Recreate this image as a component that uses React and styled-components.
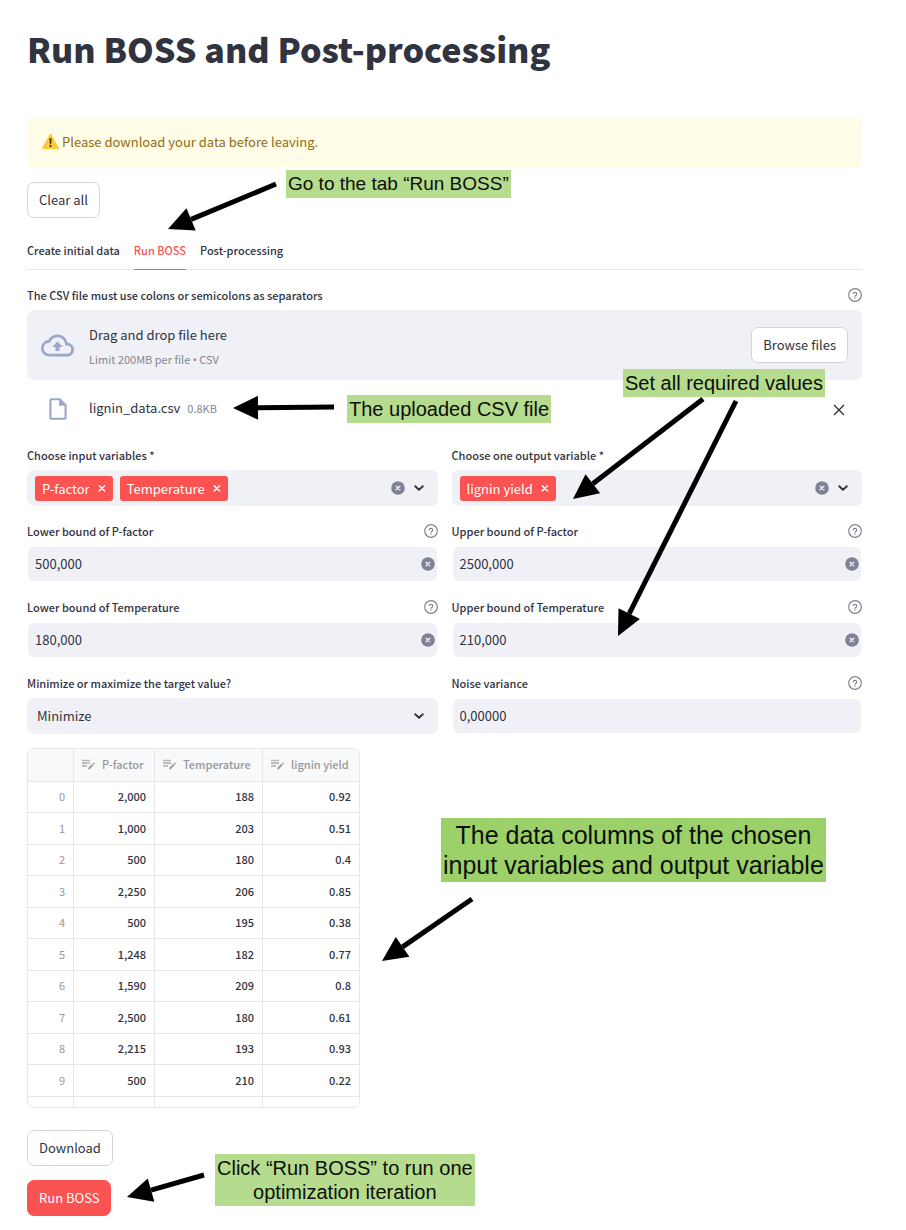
import React, { useState } from "react";
import styled, { createGlobalStyle, css } from "styled-components";

const color = {
  text: "#31333f",
  muted: "#84858d",
  faint: "#96979e",
  red: "#fb5252",
  field: "#f0f1f6",
  line: "#e6e7ea",
  border: "#d4d5d9",
  slate: "#9ba9c8",
  clear: "#7f8294",
};

const GlobalStyle = createGlobalStyle`
  *, *::before, *::after { box-sizing: border-box; }
  body {
    margin: 0;
    background: #fff;
    color: ${color.text};
    font-family: "Noto Sans CJK SC", "Noto Sans", sans-serif;
    font-size: 13px;
  }
  button, input, select { font: inherit; color: inherit; }
  button { cursor: pointer; }
`;

const Page = styled.main`
  position: relative;
  padding: 25px 44px 14px 27px;
`;

const Title = styled.h1`
  margin: 0 0 44px;
  font-size: 34px;
  font-weight: 900;
  line-height: 48px;
`;

const Alert = styled.div`
  display: flex;
  align-items: center;
  gap: 3px;
  height: 50px;
  margin-bottom: 15px;
  padding: 0 14px 2px;
  border-radius: 4px;
  background: #fffce8;
  color: #926c15;
`;

const Button = styled.button`
  display: block;
  height: 36px;
  padding: 0 11px;
  border: 1px solid ${(p) => (p.$primary ? color.red : color.border)};
  border-radius: 7px;
  background: ${(p) => (p.$primary ? color.red : "#fff")};
  color: ${(p) => (p.$primary ? "#fff" : color.text)};
  line-height: 20px;
  white-space: nowrap;
`;

const Tabs = styled.div`
  display: flex;
  gap: 14px;
  height: 37px;
  margin: 15px 0 14px;
  border-bottom: 1px solid ${color.line};
`;

const Tab = styled.button`
  height: 37px;
  padding: 0 0 2px;
  border: 0;
  border-bottom: 1px solid transparent;
  background: none;
  font-size: 11px;
  font-weight: 500;
  ${(p) =>
    p.$active &&
    css`
      color: ${color.red};
      border-color: ${color.red};
    `}
`;

const LabelRow = styled.div`
  display: flex;
  align-items: center;
  justify-content: space-between;
  height: 22px;
  margin-bottom: 4px;
  font-size: 11px;
  font-weight: 500;
`;

const DropZone = styled.section`
  display: flex;
  align-items: center;
  gap: 15px;
  height: 70px;
  padding: 0 14px;
  border-radius: 7px;
  background: ${color.field};
`;

const DropText = styled.div`
  flex: 1;
  padding-top: 4px;
  line-height: 24px;
`;

const Small = styled.small`
  display: ${(p) => (p.$block ? "block" : "inline")};
  color: ${color.muted};
  font-size: 11px;
`;

const Bullet = styled.span`
  font-family: "Open Sans", sans-serif;
`;

const FileRow = styled.div`
  display: flex;
  align-items: center;
  gap: 15px;
  height: 58px;
  margin-bottom: 6px;
  padding: 0 14px;
`;

const FileIconSlot = styled.span`
  display: flex;
  justify-content: center;
  width: 33px;
`;

const FileName = styled.div`
  display: flex;
  align-items: baseline;
  gap: 7px;
  flex: 1;
  padding-bottom: 3px;
`;

const IconButton = styled.button`
  display: flex;
  align-items: center;
  justify-content: center;
  flex: none;
  padding: 0;
  border: 0;
  background: none;
`;

const FormGrid = styled.form`
  display: grid;
  grid-template-columns: repeat(2, minmax(0, 1fr));
  gap: 14px;
  margin-bottom: 14px;
`;

const InputShell = styled.div`
  display: flex;
  align-items: center;
  height: 36px;
  padding-right: 2px;
  border: 1px solid transparent;
  border-radius: 7px;
  background: ${color.field};
  background-clip: padding-box;
`;

const TextInput = styled.input`
  flex: 1;
  min-width: 0;
  height: 34px;
  padding: 0 7px 2px;
  border: 0;
  outline: 0;
  background: none;
`;

const MultiShell = styled.div`
  display: flex;
  align-items: center;
  gap: 7px;
  height: 36px;
  padding: 0 12px 0 8px;
  border-radius: 7px;
  background: ${color.field};
`;

const Tag = styled.span`
  display: flex;
  align-items: center;
  gap: 8px;
  height: 25px;
  padding: 0 7px;
  border-radius: 3px;
  background: ${color.red};
  color: #fff;
  white-space: nowrap;
`;

const SelectShell = styled.div`
  display: grid;
  align-items: center;
  height: 36px;
  border-radius: 7px;
  background: ${color.field};

  > * { grid-area: 1 / 1; }
  > svg { justify-self: end; margin-right: 12px; pointer-events: none; }
`;

const Select = styled.select`
  width: 100%;
  height: 36px;
  padding: 0 10px 2px;
  border: 0;
  outline: 0;
  appearance: none;
  background: none;
`;

const TableFrame = styled.div`
  width: 333px;
  height: 360px;
  margin-bottom: 22px;
  overflow: hidden;
  border: 1px solid ${color.line};
  border-radius: 7px;
`;

const DataTable = styled.table`
  width: 100%;
  table-layout: fixed;
  border-collapse: separate;
  border-spacing: 0;
  font-size: 11px;

  tr { height: 31px; }
  tbody tr:nth-child(even) { height: 32px; }

  th, td {
    padding: 0 8px 2px;
    border-right: 1px solid ${color.line};
    border-bottom: 1px solid ${color.line};
    font-weight: 500;
    line-height: 20px;
    text-align: right;
  }
  th:last-child, td:last-child { border-right: 0; }
  thead th { height: 33px; background: #f8f9fb; color: ${color.faint}; text-align: left; }
  tbody th { color: ${color.faint}; font-weight: 400; }
`;

const HeadCell = styled.span`
  display: flex;
  align-items: center;
  gap: 7px;
  white-space: nowrap;
`;

const Actions = styled.div`
  display: flex;
  flex-direction: column;
  align-items: flex-start;
  gap: 14px;
`;

const calloutSizes = { small: [19, 24], medium: [20, 24], large: [25, 30] };

const Callout = styled.p`
  position: absolute;
  left: ${(p) => p.$x}px;
  top: ${(p) => p.$y}px;
  margin: 0;
  padding: 2px;
  background: ${(p) => (p.$size === "large" ? "#9bd168" : "#b5db8f")};
  color: #0c0f0a;
  font-family: "Liberation Sans", Arial, sans-serif;
  font-size: ${(p) => calloutSizes[p.$size || "medium"][0]}px;
  line-height: ${(p) => calloutSizes[p.$size || "medium"][1]}px;
  text-align: center;
  white-space: pre;
`;

const ArrowSvg = styled.svg`
  position: absolute;
  left: ${(p) => p.$x}px;
  top: ${(p) => p.$y}px;
  overflow: visible;
  pointer-events: none;
`;

function Arrow({ from, to }) {
  const [dx, dy] = [to[0] - from[0], to[1] - from[1]];
  const length = Math.hypot(dx, dy);
  const [ux, uy] = [dx / length, dy / length];
  const [bx, by] = [dx - ux * 25, dy - uy * 25];
  const head = [
    [dx, dy],
    [bx - uy * 12, by + ux * 12],
    [bx + uy * 12, by - ux * 12],
  ];
  return (
    <ArrowSvg $x={from[0]} $y={from[1]} width="1" height="1" aria-hidden="true">
      <line x1="0" y1="0" x2={bx} y2={by} stroke="#000" strokeWidth="5" />
      <polygon points={head.map((p) => p.join(",")).join(" ")} />
    </ArrowSvg>
  );
}

const WarningIcon = () => (
  <svg width="18" height="17" viewBox="0 0 18 17" aria-hidden="true">
    <path d="M9.5 1.6 17 15.2H2z" fill="#fdc938" stroke="#fdc938" strokeWidth="1.6" strokeLinejoin="round" />
    <path d="M8.4 5.2h2.2l-.5 6H8.9z" fill="#3a3020" />
    <circle cx="9.5" cy="13.1" r="1.1" fill="#3a3020" />
  </svg>
);

const HelpIcon = () => (
  <svg width="14" height="14" viewBox="0 0 14 14" fill="none" stroke="#82838b" role="img" aria-label="Help">
    <circle cx="7" cy="7" r="6.3" strokeWidth="1.2" />
    <path d="M5.2 5.6a1.85 1.85 0 0 1 3.6.5C8.8 7.2 7 7.5 7 8.2" strokeWidth="1.2" strokeLinecap="round" />
    <path d="M7 10v.1" strokeWidth="1.3" strokeLinecap="round" />
  </svg>
);

const ClearIcon = () => (
  <svg width="14" height="14" viewBox="0 0 14 14" aria-hidden="true">
    <circle cx="7" cy="7" r="6.8" fill={color.clear} />
    <path d="m5.2 5.2 3.6 3.6m0-3.6-3.6 3.6" stroke="#f0f1f6" strokeWidth="1.4" strokeLinecap="round" />
  </svg>
);

const ChevronIcon = () => (
  <svg width="14" height="14" viewBox="0 0 14 14" aria-hidden="true">
    <path d="m3.2 5.2 3.8 3.6 3.8-3.6" fill="none" stroke={color.text} strokeWidth="1.9" strokeLinecap="round" strokeLinejoin="round" />
  </svg>
);

const TagCross = () => (
  <svg width="8" height="8" viewBox="0 0 8 8" aria-hidden="true">
    <path d="m1.2 1.7 5.4 5.4m0-5.4-5.4 5.4" stroke="#fff" strokeWidth="1.4" strokeLinecap="round" />
  </svg>
);

const CloseIcon = () => (
  <svg width="18" height="18" viewBox="0 0 18 18" aria-hidden="true">
    <path d="m4 5 10 10m0-10-10 10" stroke={color.text} strokeWidth="1.4" />
  </svg>
);

const CloudIcon = () => (
  <svg width="33" height="33" viewBox="0 0 24 24" fill={color.slate} aria-hidden="true">
    <path d="M19.35 10.04A7.49 7.49 0 0 0 12 4C9.11 4 6.6 5.64 5.35 8.04A5.994 5.994 0 0 0 0 14c0 3.31 2.69 6 6 6h13c2.76 0 5-2.24 5-5 0-2.64-2.05-4.78-4.65-4.96zM19 18H6c-2.21 0-4-1.79-4-4 0-2.05 1.53-3.76 3.56-3.97l1.07-.11.5-.95A5.469 5.469 0 0 1 12 6c2.62 0 4.88 1.86 5.39 4.43l.3 1.5 1.53.11A2.98 2.98 0 0 1 22 15c0 1.65-1.35 3-3 3zM8 13h2.55v3h2.9v-3H16l-4-4z" />
  </svg>
);

const FileIcon = () => (
  <svg width="26" height="26" viewBox="0 0 24 24" fill={color.slate} aria-hidden="true">
    <path d="M14 2H6c-1.1 0-1.99.9-1.99 2L4 20c0 1.1.89 2 1.99 2H18c1.1 0 2-.9 2-2V8l-6-6zM6 20V4h7v5h5v11H6z" />
  </svg>
);

const EditColumnIcon = () => (
  <svg width="13" height="12" viewBox="0 0 13 12" fill="none" aria-hidden="true">
    <path d="M0 2.5h8M0 5.2h8M0 7.9h5" stroke="#b5b6bb" strokeWidth="1.7" />
    <path d="m6.6 11 4.4-4.6" stroke="#9a9ba2" strokeWidth="1.9" />
    <path d="m11.6 5.8.8-.8" stroke="#9a9ba2" strokeWidth="1.9" />
  </svg>
);

function NumberField({ id, label, initial, help = true, clearable = true }) {
  const [value, setValue] = useState(initial);
  return (
    <div>
      <LabelRow>
        <label htmlFor={id}>{label}</label>
        {help && <HelpIcon />}
      </LabelRow>
      <InputShell>
        <TextInput id={id} type="text" inputMode="decimal" value={value} onChange={(e) => setValue(e.target.value)} />
        {clearable && (
          <IconButton type="button" aria-label={`Clear ${label}`} onClick={() => setValue("")}>
            <ClearIcon />
          </IconButton>
        )}
      </InputShell>
    </div>
  );
}

function MultiSelectField({ id, label, initial }) {
  const [tags, setTags] = useState(initial);
  return (
    <div>
      <LabelRow>
        <label htmlFor={id}>{label}</label>
      </LabelRow>
      <MultiShell>
        {tags.map((tag) => (
          <Tag key={tag}>
            {tag}
            <IconButton type="button" aria-label={`Remove ${tag}`} onClick={() => setTags(tags.filter((t) => t !== tag))}>
              <TagCross />
            </IconButton>
          </Tag>
        ))}
        <TextInput id={id} type="text" role="combobox" aria-expanded="false" />
        <IconButton type="button" aria-label="Clear all values" onClick={() => setTags([])}>
          <ClearIcon />
        </IconButton>
        <IconButton type="button" aria-label="Open options">
          <ChevronIcon />
        </IconButton>
      </MultiShell>
    </div>
  );
}

const tabNames = ["Create initial data", "Run BOSS", "Post-processing"];
const columns = ["P-factor", "Temperature", "lignin yield"];
const rows = [
  ["2,000", "188", "0.92"],
  ["1,000", "203", "0.51"],
  ["500", "180", "0.4"],
  ["2,250", "206", "0.85"],
  ["500", "195", "0.38"],
  ["1,248", "182", "0.77"],
  ["1,590", "209", "0.8"],
  ["2,500", "180", "0.61"],
  ["2,215", "193", "0.93"],
  ["500", "210", "0.22"],
  ["", "", ""],
];

export default function App() {
  const [tab, setTab] = useState("Run BOSS");
  return (
    <>
      <GlobalStyle />
      <Page>
        <Title>Run BOSS and Post-processing</Title>
        <Alert role="alert">
          <WarningIcon />
          Please download your data before leaving.
        </Alert>
        <Button type="button">Clear all</Button>

        <Tabs role="tablist">
          {tabNames.map((name) => (
            <Tab key={name} type="button" role="tab" aria-selected={tab === name} $active={tab === name} onClick={() => setTab(name)}>
              {name}
            </Tab>
          ))}
        </Tabs>

        <LabelRow>
          <span id="upload-label">The CSV file must use colons or semicolons as separators</span>
          <HelpIcon />
        </LabelRow>
        <DropZone aria-labelledby="upload-label">
          <CloudIcon />
          <DropText>
            Drag and drop file here
            <Small $block>
              Limit 200MB per file <Bullet>•</Bullet> CSV
            </Small>
          </DropText>
          <Button type="button">Browse files</Button>
        </DropZone>
        <FileRow>
          <FileIconSlot>
            <FileIcon />
          </FileIconSlot>
          <FileName>
            lignin_data.csv <Small>0.8KB</Small>
          </FileName>
          <IconButton type="button" aria-label="Remove file">
            <CloseIcon />
          </IconButton>
        </FileRow>

        <FormGrid>
          <MultiSelectField id="inputs" label="Choose input variables *" initial={["P-factor", "Temperature"]} />
          <MultiSelectField id="output" label="Choose one output variable *" initial={["lignin yield"]} />
          <NumberField id="p-lower" label="Lower bound of P-factor" initial="500,000" />
          <NumberField id="p-upper" label="Upper bound of P-factor" initial="2500,000" />
          <NumberField id="t-lower" label="Lower bound of Temperature" initial="180,000" />
          <NumberField id="t-upper" label="Upper bound of Temperature" initial="210,000" />
          <div>
            <LabelRow>
              <label htmlFor="goal">Minimize or maximize the target value?</label>
            </LabelRow>
            <SelectShell>
              <Select id="goal" defaultValue="Minimize">
                <option>Minimize</option>
                <option>Maximize</option>
              </Select>
              <ChevronIcon />
            </SelectShell>
          </div>
          <NumberField id="noise" label="Noise variance" initial="0,00000" clearable={false} />
        </FormGrid>

        <TableFrame>
          <DataTable>
            <colgroup>
              <col width="46" />
              <col width="81" />
              <col width="108" />
              <col width="96" />
            </colgroup>
            <thead>
              <tr>
                <th aria-label="Row" />
                {columns.map((name) => (
                  <th key={name} scope="col">
                    <HeadCell>
                      <EditColumnIcon />
                      {name}
                    </HeadCell>
                  </th>
                ))}
              </tr>
            </thead>
            <tbody>
              {rows.map((cells, i) => (
                <tr key={i}>
                  <th scope="row">{cells[0] && i}</th>
                  {cells.map((cell, j) => (
                    <td key={j}>{cell}</td>
                  ))}
                </tr>
              ))}
            </tbody>
          </DataTable>
        </TableFrame>

        <Actions>
          <Button type="button">Download</Button>
          <Button type="button" $primary>
            Run BOSS
          </Button>
        </Actions>

        <Callout $x={286} $y={170} $size="small">Go to the tab “Run BOSS”</Callout>
        <Callout $x={347} $y={395}>The uploaded CSV file</Callout>
        <Callout $x={623} $y={369}>Set all required values</Callout>
        <Callout $x={441} $y={818} $size="large">{"The data columns of the chosen\ninput variables and output variable"}</Callout>
        <Callout $x={215} $y={1154}>{"Click “Run BOSS” to run one\noptimization iteration"}</Callout>

        <Arrow from={[276, 184]} to={[168, 229]} />
        <Arrow from={[334, 407]} to={[233, 408]} />
        <Arrow from={[703, 399]} to={[573, 499]} />
        <Arrow from={[736, 401]} to={[618, 636]} />
        <Arrow from={[472, 899]} to={[382, 961]} />
        <Arrow from={[204, 1175]} to={[127, 1197]} />
      </Page>
    </>
  );
}
